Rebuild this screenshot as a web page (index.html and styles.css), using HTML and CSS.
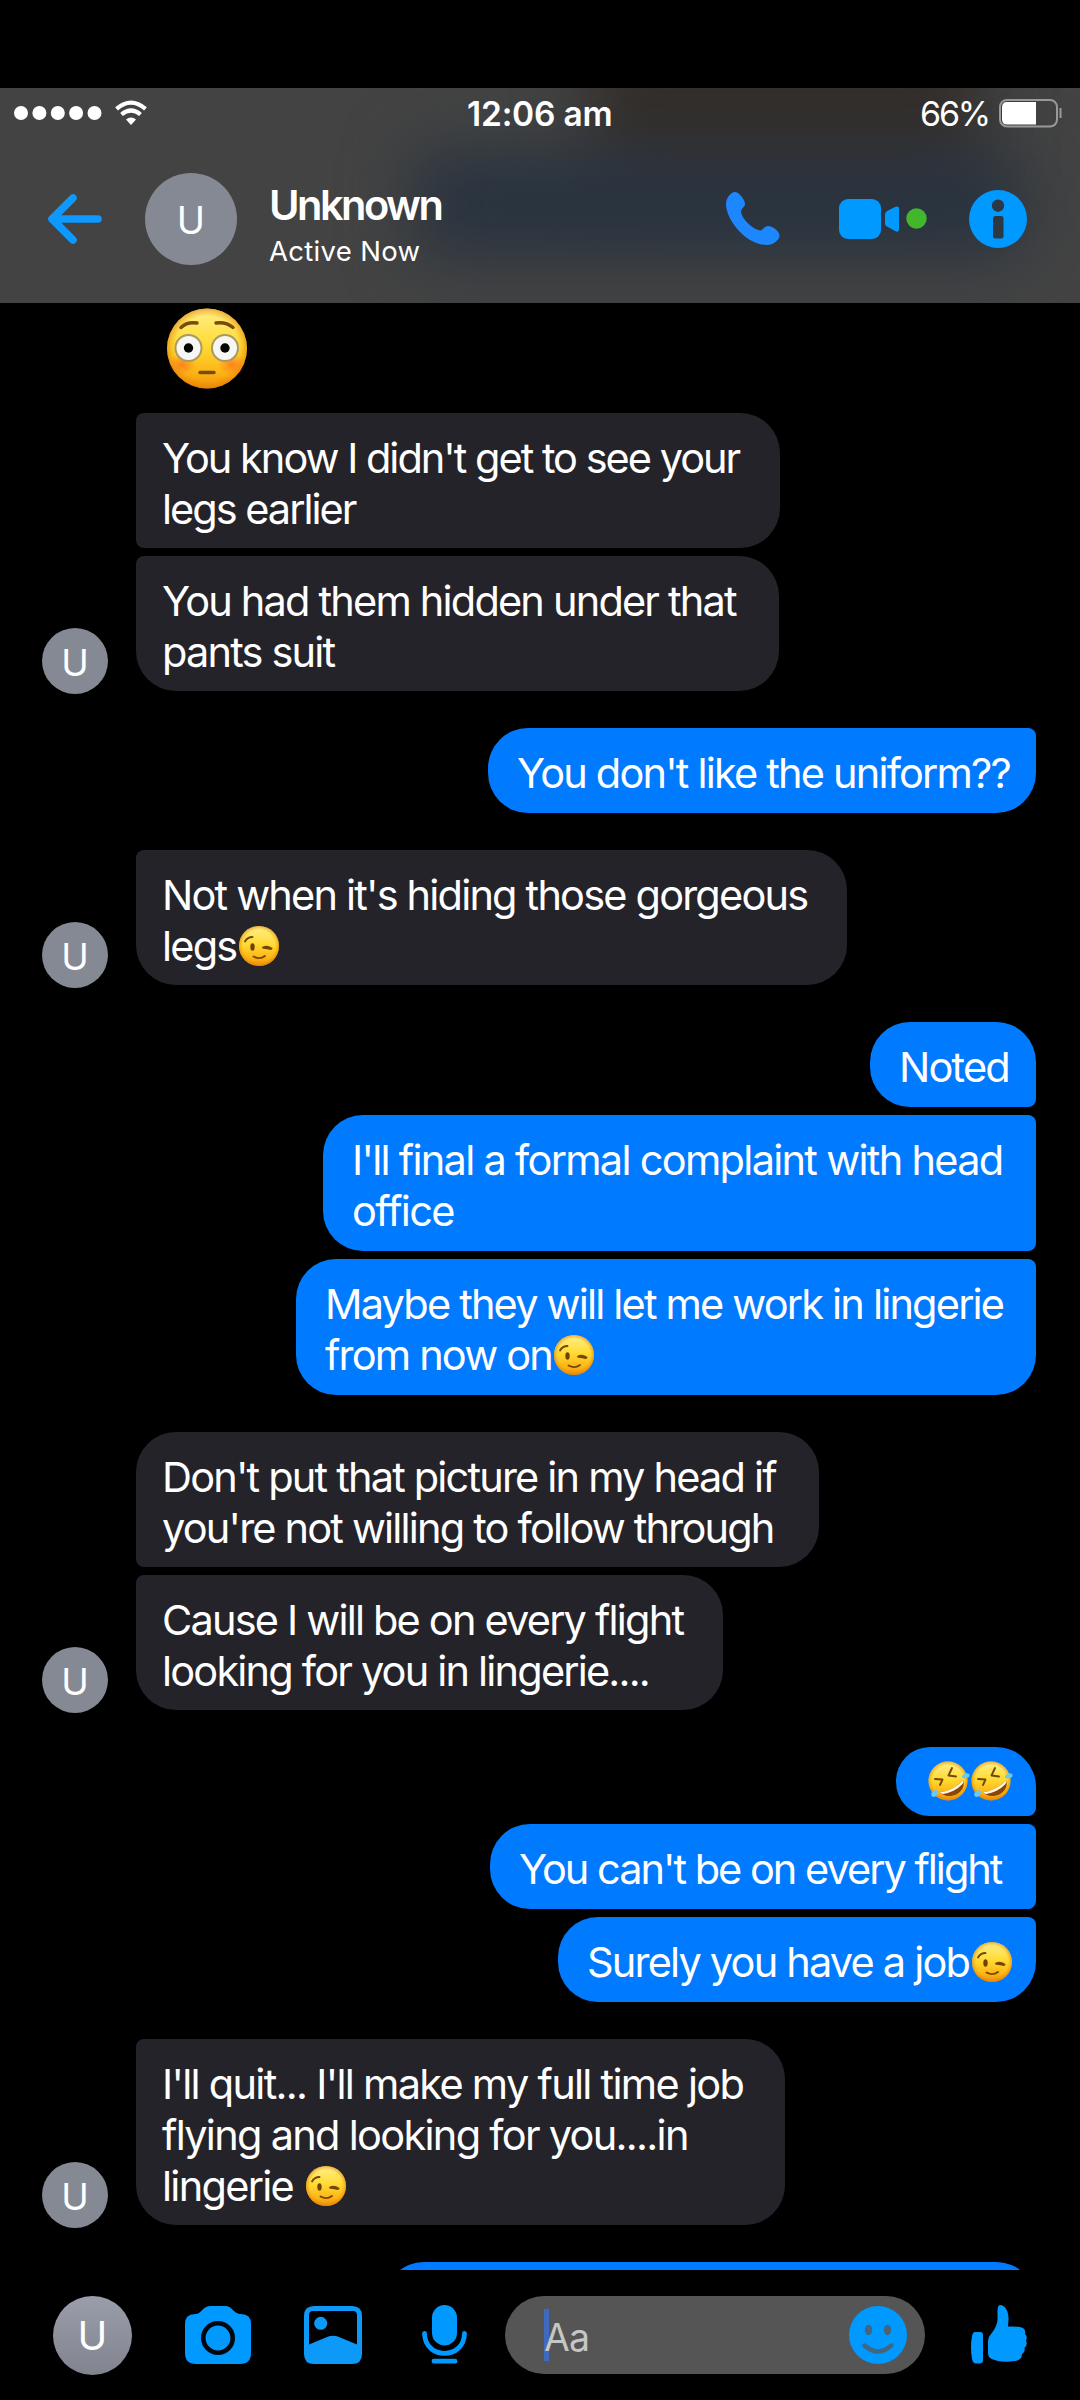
FILE: index.html
```html
<!DOCTYPE html>
<html lang="en">
<head>
<meta charset="utf-8">
<title>Chat</title>
<link rel="stylesheet" href="styles.css">
</head>
<body>
<svg class="defs" aria-hidden="true">
  <defs>
    <linearGradient id="face" x1="0" y1="0" x2="0" y2="1">
      <stop offset="0" stop-color="#fff08a"/><stop offset=".45" stop-color="#ffdb35"/><stop offset=".8" stop-color="#fcb515"/><stop offset="1" stop-color="#ee900b"/>
    </linearGradient>
    <radialGradient id="edge"><stop offset=".8" stop-color="#e88700" stop-opacity="0"/><stop offset="1" stop-color="#e07b00" stop-opacity=".55"/></radialGradient>
    <radialGradient id="blush"><stop offset="0" stop-color="#fb5b1c" stop-opacity=".6"/><stop offset="1" stop-color="#fb5b1c" stop-opacity="0"/></radialGradient>
    <symbol id="wink" viewBox="0 0 40 40">
      <circle cx="20" cy="20" r="20" fill="url(#face)"/><circle cx="20" cy="20" r="20" fill="url(#edge)"/>
      <ellipse cx="13.5" cy="21" rx="2.2" ry="3.7" fill="#6f4205"/>
      <path d="M6 15.5Q8.500 11 13.500 11M24 21.500Q28 19.500 32.500 22.500M24.500 21.700Q28.500 22 32 23M14.500 30.500Q20.500 34 26 30" fill="none" stroke="#754705" stroke-width="1.9" stroke-linecap="round"/>
    </symbol>
    <symbol id="rofl" viewBox="0 0 42 40">
      <circle cx="20" cy="20" r="19.500" fill="url(#face)"/><circle cx="20" cy="20" r="19.500" fill="url(#edge)"/>
      <path d="M7 18L14.500 18.500L12 24M24 7L20.500 14.500L28 15.500" fill="none" stroke="#754705" stroke-width="1.900" stroke-linecap="round" stroke-linejoin="round"/>
      <path d="M12 31C20 30.500 29 26 35 19.500C37.500 25 33 33 25 34.500C19 36 14 34 12 31Z" fill="#884707"/>
      <path d="M12 31C20 30.500 29 26 35 19.500Q35.500 21.500 34.500 23Q27 31 15 33Q13 32.500 12 31Z" fill="#fff6e8"/>
      <path d="M34 15Q38 10.500 41.500 13.500Q42 18 34 17ZM8.500 29Q2 30 3.500 35Q8 38 10.500 31Z" fill="#6cc9f0"/>
    </symbol>
    <symbol id="flushed" viewBox="0 0 80 80">
      <circle cx="40" cy="40" r="40" fill="url(#face)"/><circle cx="40" cy="40" r="40" fill="url(#edge)"/>
      <ellipse cx="15" cy="56" rx="14" ry="11" fill="url(#blush)"/><ellipse cx="65" cy="56" rx="14" ry="11" fill="url(#blush)"/>
      <g fill="#f6f6f4" stroke="#a99a60" stroke-width="2"><circle cx="21.500" cy="39.500" r="13"/><circle cx="58" cy="39.500" r="13"/></g>
      <circle cx="21.500" cy="39.500" r="4.700" fill="#050505"/><circle cx="58" cy="39.500" r="4.700" fill="#050505"/>
      <path d="M14 19Q20 13 30 14.500M49 14.500Q59 13 66 19M33 64H47" fill="none" stroke="#7a4a08" stroke-width="3.400" stroke-linecap="round"/>
    </symbol>
  </defs>
</svg>

<header class="header">
  <div class="status">
    <svg class="signal" width="150" height="30" viewBox="0 0 150 30" fill="#fff">
      <circle cx="21" cy="15" r="7"/><circle cx="39.400" cy="15" r="7"/><circle cx="57.800" cy="15" r="7"/><circle cx="76.100" cy="15" r="7"/><circle cx="94.500" cy="15" r="7"/>
      <g fill="none" stroke="#fff" stroke-width="4.200"><path d="M116.500 10.800Q131 -1.500 145.500 10.800"/><path d="M121.500 16.500Q131 8.500 140.500 16.500"/></g>
      <path d="M126 21.500Q131 17.500 136 21.500L131 27Z"/>
    </svg>
    <span class="time">12:06 am</span>
    <span class="charge">66%</span>
    <svg class="battery" width="64" height="30" viewBox="0 0 64 30">
      <rect x="1" y="2" width="57" height="26.500" rx="7" fill="none" stroke="#999" stroke-width="2"/>
      <path d="M8 4H37V26.500H8Q3 26.500 3 21V9.500Q3 4 8 4Z" fill="#fff"/>
      <path d="M61.500 10V20" stroke="#999" stroke-width="2"/>
    </svg>
  </div>
  <div class="contact">
    <svg class="back" width="54" height="50" viewBox="0 0 54 50" fill="none" stroke="#0d99ff" stroke-width="7.500" stroke-linecap="round" stroke-linejoin="round"><path d="M25 4L4 25L25 46M4 25H50"/></svg>
    <div class="avatar avatar-lg">U</div>
    <div class="who">
      <div class="name">Unknown</div>
      <div class="presence">Active Now</div>
    </div>
    <svg class="phone" width="54" height="54" viewBox="0 0 54 54" fill="#1d87ff"><path d="M9 0C13 0 19 8 19 12C19 15 15 16 15 20C16 27 26 37 34 38.500C37 38.500 38 34 42 34C46 34 53.500 39 53.500 43.500C53.500 48 47 53 41 53C20 53 0 28 0 12C0 6 5 0 9 0Z"/></svg>
    <svg class="video" width="88" height="42" viewBox="0 0 88 42" fill="#0099ff"><rect y="1" width="42" height="40" rx="9"/><path d="M46 17Q46 14 49 12.500L56 9Q60 7.500 60 11V31Q60 35 56 33L49 29Q46 28 46 25Z"/><circle cx="77.500" cy="20.500" r="10.200" fill="#43b72b"/></svg>
    <svg class="info" width="58" height="58" viewBox="0 0 58 58"><circle cx="29" cy="29" r="29" fill="#0099ff"/><circle cx="29" cy="15.700" r="6.200" fill="#2d3845"/><rect x="24" y="26" width="10.500" height="22.500" rx="2.500" fill="#2d3845"/></svg>
  </div>
</header>

<main class="chat">
  <section class="group received">
    <div class="avatar avatar-sm">U</div>
    <div class="stack">
      <svg class="flushed" role="img" aria-label="😳"><use href="#flushed"/></svg>
      <p class="bubble w644 tight">You know I didn't get to see your<br>legs earlier</p>
      <p class="bubble w643">You had them hidden under that<br>pants suit</p>
    </div>
  </section>
  <section class="group sent">
    <div class="stack">
      <p class="bubble w548 joined">You don't like the uniform??</p>
    </div>
  </section>
  <section class="group received">
    <div class="avatar avatar-sm">U</div>
    <div class="stack">
      <p class="bubble w711 joined">Not when it's hiding those gorgeous<br>legs<svg class="emoji" role="img" aria-label="😉"><use href="#wink"/></svg></p>
    </div>
  </section>
  <section class="group sent">
    <div class="stack">
      <p class="bubble w166">Noted</p>
      <p class="bubble w713 loose">I'll final a formal complaint with head<br>office</p>
      <p class="bubble w740">Maybe they will let me work in lingerie<br>from now on<svg class="emoji" role="img" aria-label="😉"><use href="#wink"/></svg></p>
    </div>
  </section>
  <section class="group received">
    <div class="avatar avatar-sm">U</div>
    <div class="stack">
      <p class="bubble w683">Don't put that picture in my head if<br>you're not willing to follow through</p>
      <p class="bubble w587">Cause I will be on every flight<br>looking for you in lingerie....</p>
    </div>
  </section>
  <section class="group sent">
    <div class="stack">
      <p class="bubble emoji-only"><svg class="rofl" role="img" aria-label="🤣"><use href="#rofl"/></svg><svg class="rofl" role="img" aria-label="🤣"><use href="#rofl"/></svg></p>
      <p class="bubble w546 tight">You can't be on every flight</p>
      <p class="bubble w478">Surely you have a job<svg class="emoji" role="img" aria-label="😉"><use href="#wink"/></svg></p>
    </div>
  </section>
  <section class="group received">
    <div class="avatar avatar-sm">U</div>
    <div class="stack">
      <p class="bubble w649 joined loose">I'll quit... I'll make my full time job<br>flying and looking for you....in<br>lingerie <svg class="emoji" role="img" aria-label="😉"><use href="#wink"/></svg></p>
    </div>
  </section>
  <section class="group sent">
    <div class="stack">
      <p class="bubble w652"></p>
    </div>
  </section>
</main>

<footer class="composer">
  <div class="avatar avatar-me">U</div>
  <svg class="camera" width="66" height="58" viewBox="0 0 66 58"><path d="M10 8C17 8 17 0 26 0H40C48 0 48 8 56 8Q66 8 66 18V47Q66 58 55 58H11Q0 58 0 47V18Q0 8 10 8Z" fill="#0099ff"/><circle cx="33" cy="32" r="14.700" fill="none" stroke="#00070e" stroke-width="4.600"/></svg>
  <svg class="gallery" width="58" height="58" viewBox="0 0 58 58"><path fill-rule="evenodd" d="M10 0H48Q58 0 58 10V48Q58 58 48 58H10Q0 58 0 48V10Q0 0 10 0ZM9 5Q5 5 5 9V38.500L23 31Q29 28.500 35 31L53 38.500V9Q53 5 49 5Z" fill="#0d99f8"/><circle cx="16.700" cy="17.300" r="6.500" fill="#0d99f8"/></svg>
  <svg class="mic" width="45" height="59" viewBox="0 0 45 59"><rect x="10" width="25" height="40.500" rx="12.500" fill="#0099ff"/><path d="M2.500 28.500C3 55 42 55 42.500 28.500M12 56.200H33" fill="none" stroke="#0099ff" stroke-width="4.800" stroke-linecap="round"/></svg>
  <div class="field">
    <span class="caret"></span><span class="placeholder">Aa</span>
    <svg class="smiley" width="58" height="58" viewBox="0 0 58 58"><circle cx="29" cy="29" r="29" fill="#0099ff"/><g fill="#426580"><ellipse cx="19.500" cy="24" rx="3.700" ry="5.200"/><ellipse cx="38.500" cy="24" rx="3.700" ry="5.200"/></g><path d="M15.500 39.500Q29 51.500 42.500 39.500" fill="none" stroke="#426580" stroke-width="4.400" stroke-linecap="round"/></svg>
  </div>
  <svg class="like" width="56" height="59" viewBox="0 0 56 59" fill="#0099ff"><path d="M4 27H9Q12 27 12 30V55Q12 58.500 8 58.500H5Q2 58.500 1 54Q-1 42 1 31Q2 27 4 27Z"/><path d="M17 36Q17 32 20 29C25 23 27 18 26.500 10Q26 0 29 0C35 0 38 8 37.500 15L37 21.500Q47 21 52 23Q55 25 54 29Q57 32 55 35.500Q57 40 53.500 43Q54.500 47 51 49Q51 55 44 56Q30 58 22 54.500Q17 53 17 48Z"/></svg>
</footer>
</body>
</html>
```
FILE: styles.css
```css
* { box-sizing: border-box; }

body {
  margin: 0;
  width: 1080px;
  height: 2400px;
  padding-top: 88px;
  display: flex;
  flex-direction: column;
  overflow: hidden;
  background: #000;
  color: #fff;
  font-family: Inter, "Liberation Sans", sans-serif;
}

svg { display: block; flex: none; }
.defs { position: absolute; width: 0; height: 0; }

/* Header */
.header {
  position: relative;
  isolation: isolate;
  flex: none;
  height: 215px;
  overflow: hidden;
  background: #434343;
}
.header::before,
.header::after {
  content: "";
  position: absolute;
  z-index: -1;
  filter: blur(34px);
}
.header::before { left: 590px; top: -60px; width: 390px; height: 150px; background: #332e2a; }
.header::after { left: 415px; top: 66px; width: 605px; height: 100px; background: #27323f; }

.status {
  display: flex;
  align-items: center;
  height: 50px;
  font-size: 34px;
  line-height: 50px;
}
.time { margin-left: 317px; width: 147px; padding-top: 1px; font-weight: 600; font-size: 33.5px; letter-spacing: -0.2px; white-space: nowrap; }
.charge { margin-left: 306px; width: 69px; padding-top: 1px; letter-spacing: -2.2px; }
.battery { margin-left: 10px; }

.contact { display: flex; align-items: center; height: 162px; }
.back { margin-left: 48px; }
.who { margin-left: 32px; width: 457px; padding-top: 9px; }
.name { font-size: 41.5px; line-height: 50px; font-weight: 600; letter-spacing: -2.5px; }
.presence { margin-top: 4px; font-size: 27.5px; line-height: 34px; letter-spacing: 0.3px; }
.video { margin-left: 59px; }
.info { margin-left: 42px; }

.avatar {
  flex: none;
  display: flex;
  align-items: center;
  justify-content: center;
  border-radius: 50%;
  background: #858993;
}
.avatar-lg { width: 92px; height: 92px; margin-left: 43px; font-size: 38px; padding-top: 1px; }
.avatar-sm { width: 66px; height: 66px; margin: 0 28px -3px 42px; font-size: 37px; padding-top: 3px; }
.avatar-me { width: 79px; height: 79px; margin-left: 53px; font-size: 40px; background: linear-gradient(#9a9eaa, #81848f); }

/* Conversation */
.chat {
  flex: none;
  height: 1967px;
  padding-top: 5px;
  overflow: hidden;
  display: flex;
  flex-direction: column;
  gap: 37px;
}
.group { flex: none; display: flex; align-items: flex-end; }
.sent { justify-content: flex-end; padding-right: 44px; }
.stack { display: flex; flex-direction: column; gap: 8px; }
.sent .stack { align-items: flex-end; }
.flushed { width: 80px; height: 81px; margin: 0 0 16px 31px; }

.bubble {
  margin: 0;
  padding: 20px 0 13px 26px;
  border-radius: 8px 40px 40px 8px;
  background: #25232a;
  font-size: 41.5px;
  line-height: 51px;
  letter-spacing: -1.81px;
  white-space: nowrap;
}
.tight { letter-spacing: -2px; }
.loose { letter-spacing: -1.71px; }
.received .bubble:first-child { border-top-left-radius: 40px; }
.received .bubble:last-child { border-bottom-left-radius: 40px; }
.received .joined:first-child { border-top-left-radius: 8px; }

.sent .bubble {
  padding: 20px 0 14px 29px;
  border-radius: 40px 8px 8px 40px;
  background: #007aff;
}
.sent .bubble:first-child { border-top-right-radius: 40px; }
.sent .bubble:last-child { border-bottom-right-radius: 40px; }
.sent .joined:first-child { border-top-right-radius: 8px; }
.sent .w652 { height: 85px; }

.sent .emoji-only {
  display: flex;
  gap: 1px;
  width: 140px;
  height: 69px;
  padding: 14px 0 0 32px;
  border-radius: 34px 34px 8px 34px;
}
.emoji { display: inline-block; width: 40px; height: 40px; margin: 0 1.5px 0 2.5px; vertical-align: -5px; }
.rofl { width: 42px; height: 40px; }

.w166 { width: 166px; }
.w478 { width: 478px; }
.w546 { width: 546px; }
.w548 { width: 548px; }
.w587 { width: 587px; }
.w643 { width: 643px; }
.w644 { width: 644px; }
.w649 { width: 649px; }
.w652 { width: 652px; }
.w683 { width: 683px; }
.w711 { width: 711px; }
.w713 { width: 713px; }
.w740 { width: 740px; }

/* Composer */
.composer { flex: none; display: flex; align-items: center; height: 130px; }
.camera { margin-left: 53px; }
.gallery { margin-left: 53px; }
.mic { margin-left: 60px; }
.field {
  display: flex;
  align-items: center;
  width: 420px;
  height: 78px;
  margin-left: 38px;
  padding: 0 18px 0 39px;
  border-radius: 39px;
  background: #555556;
}
.caret { width: 5px; height: 52px; background: #4069c0; }
.placeholder { margin: 4px auto 0 -5px; font-size: 37.5px; letter-spacing: -0.8px; color: #c6c6c4; }
.like { margin-left: 46px; }
.camera, .gallery, .mic, .smiley, .like { margin-top: -1px; }
```
